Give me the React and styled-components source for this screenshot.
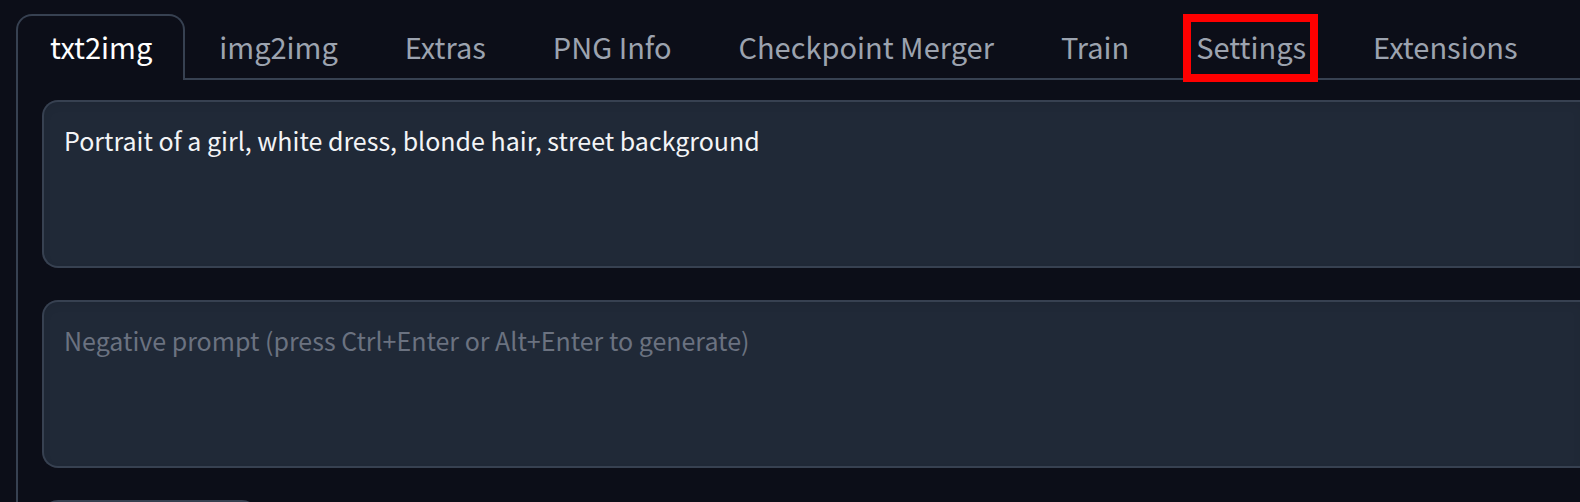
import React, { useState } from "react";
import styled, { createGlobalStyle } from "styled-components";

const GlobalStyle = createGlobalStyle`
  *, *::before, *::after { box-sizing: border-box; }
  html { background: #0c0e18; }
  body {
    margin: 0;
    overflow: hidden;
    color: #f3f4f6;
    font-family: "Noto Sans CJK SC", "Noto Sans", sans-serif;
  }
`;

const Page = styled.main`
  height: 100vh;
  overflow: hidden;
  padding: 14px 0 0 16px;
`;

const TabBar = styled.div`
  display: flex;
  border-bottom: 2px solid #374151;
`;

const Tab = styled.button`
  position: relative;
  flex: none;
  margin: 0 0 -2px;
  padding: 6px 31px 10px 32px;
  border: 2px solid transparent;
  border-color: ${(p) => (p.$active ? "#374151" : "transparent")};
  border-bottom: 0;
  border-radius: 16px 16px 0 0;
  background: ${(p) => (p.$active ? "#0c0e18" : "transparent")};
  color: ${(p) => (p.$active ? "#ffffff" : "#9ca3af")};
  font: inherit;
  font-size: 29px;
  line-height: 48px;
  white-space: nowrap;
  cursor: pointer;
`;

const Highlight = styled.span`
  position: absolute;
  inset: -2px 19px;
  border: 8px solid #ff0000;
  pointer-events: none;
`;

const Panel = styled.section`
  display: flex;
  flex-direction: column;
  gap: 32px;
  padding: 20px 0 0 24px;
  border-left: 2px solid #374151;
`;

const Prompt = styled.textarea`
  display: block;
  width: 100%;
  height: 168px;
  padding: 20px;
  border: 2px solid #374151;
  border-right: 0;
  border-radius: 16px 0 0 16px;
  outline: 0;
  resize: none;
  background: #202937;
  box-shadow: inset 0 4px 8px rgba(0, 0, 0, 0.05);
  color: #f3f4f6;
  font: inherit;
  font-size: 25px;
  line-height: 36px;

  &::placeholder { color: #6b7280; opacity: 1; }
`;

const SubPanel = styled.div`
  width: 216px;
  height: 64px;
  border: 2px solid #374151;
  border-radius: 16px;
  background: #202937;
`;

const tabs = [
  "txt2img",
  "img2img",
  "Extras",
  "PNG Info",
  "Checkpoint Merger",
  "Train",
  "Settings",
  "Extensions",
];

export default function App() {
  const [active, setActive] = useState("txt2img");
  const [prompt, setPrompt] = useState(
    "Portrait of a girl, white dress, blonde hair, street background"
  );
  const [negative, setNegative] = useState("");

  return (
    <>
      <GlobalStyle />
      <Page>
        <TabBar role="tablist">
          {tabs.map((name) => (
            <Tab
              key={name}
              type="button"
              role="tab"
              aria-selected={name === active}
              $active={name === active}
              onClick={() => setActive(name)}
            >
              {name}
              {name === "Settings" && <Highlight />}
            </Tab>
          ))}
        </TabBar>
        <Panel>
          <Prompt
            aria-label="Prompt"
            spellCheck={false}
            value={prompt}
            onChange={(e) => setPrompt(e.target.value)}
          />
          <Prompt
            aria-label="Negative prompt"
            spellCheck={false}
            placeholder="Negative prompt (press Ctrl+Enter or Alt+Enter to generate)"
            value={negative}
            onChange={(e) => setNegative(e.target.value)}
          />
          <SubPanel />
        </Panel>
      </Page>
    </>
  );
}
